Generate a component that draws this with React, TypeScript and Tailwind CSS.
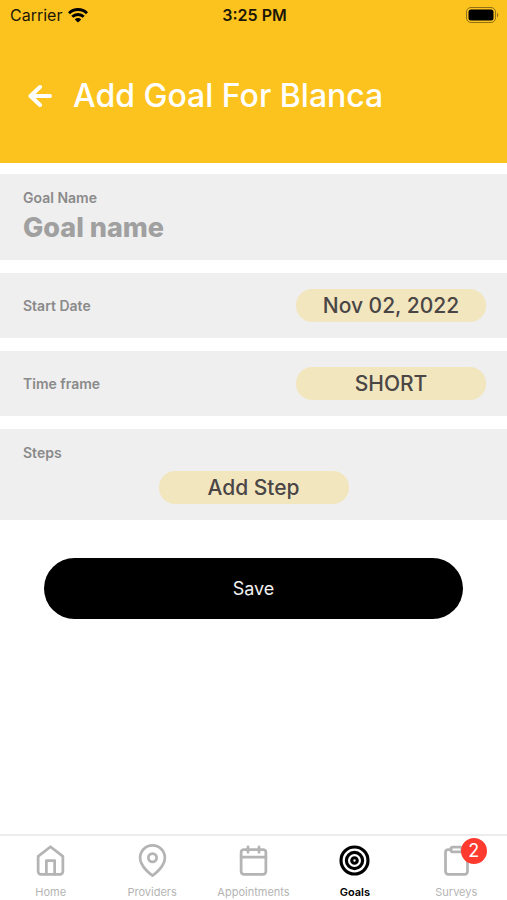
import { useState } from 'react'
import type { ComponentType, ReactNode } from 'react'
import clsx from 'clsx'
import { FiHome, FiMapPin } from 'react-icons/fi'

interface Tab { label: string; icon: ComponentType<{ size?: number }>; badge?: number }

const TABS: Tab[] = [
  { label: 'Home', icon: FiHome },
  { label: 'Providers', icon: FiMapPin },
  { label: 'Appointments', icon: CalendarIcon },
  { label: 'Goals', icon: TargetIcon },
  { label: 'Surveys', icon: ClipboardIcon, badge: 2 },
]

const LABEL_CLS = 'text-[14px] leading-4 font-semibold text-[#8a8a8a]'

export default function App() {
  const [name, setName] = useState('')
  const [frame, setFrame] = useState('SHORT')

  return (
    <div className="min-h-screen flex flex-col bg-white font-['Inter','Liberation_Sans',sans-serif]">
      <header className="bg-[#fcc31e] pb-[45px]">
        <StatusBar />
        <div className="flex items-center gap-5 pl-7 pr-6 pt-11">
          <button type="button" aria-label="Back" className="text-white">
            <BackArrow />
          </button>
          <h1 className="text-[32px] leading-[44px] font-medium text-white">Add Goal For Blanca</h1>
        </div>
      </header>

      <form className="flex-1 flex flex-col gap-[13px] pt-[11px]" onSubmit={e => e.preventDefault()}>
        <div className="bg-[#efefef] px-[23px] pt-4 pb-3">
          <label htmlFor="goal-name" className={clsx(LABEL_CLS, 'block')}>Goal Name</label>
          <input
            id="goal-name"
            value={name}
            onChange={e => setName(e.target.value)}
            placeholder="Goal name"
            className="block w-full h-[42px] text-[27px] font-extrabold text-[#4b4646] placeholder:text-[#a0a0a0] bg-transparent outline-none"
          />
        </div>

        <Row>
          <span id="start-label" className={LABEL_CLS}>Start Date</span>
          <Pill labelledBy="start-label start-value"><span id="start-value">Nov 02, 2022</span></Pill>
        </Row>

        <Row>
          <label htmlFor="time-frame" className={LABEL_CLS}>Time frame</label>
          <select
            id="time-frame"
            value={frame}
            onChange={e => setFrame(e.target.value)}
            className="w-[190px] h-[33px] rounded-2xl bg-[#f2e6bf] text-[21px] font-medium text-[#4b4646] text-center appearance-none"
          >
            <option>SHORT</option>
            <option>LONG</option>
          </select>
        </Row>

        <div className="flex flex-col bg-[#efefef] px-[23px] py-4">
          <span className={LABEL_CLS}>Steps</span>
          <div className="flex justify-center pt-[10px]">
            <Pill>Add Step</Pill>
          </div>
        </div>

        <div className="px-11 pt-[25px]">
          <button type="submit" className="w-full h-[61px] rounded-full bg-black text-[18px] text-[#f0f0f0]">Save</button>
        </div>
      </form>

      <TabBar active="Goals" />
    </div>
  )
}

function Row({ children }: { children: ReactNode }) {
  return <div className="flex items-center justify-between bg-[#efefef] pl-[23px] pr-[21px] py-4">{children}</div>
}

function Pill({ children, labelledBy }: { children: ReactNode; labelledBy?: string }) {
  return (
    <button type="button" aria-labelledby={labelledBy} className="w-[190px] h-[33px] rounded-2xl bg-[#f2e6bf] text-[21px] font-medium text-[#4b4646]">
      {children}
    </button>
  )
}

function StatusBar() {
  return (
    <div className="grid grid-cols-3 items-center h-[30px] pl-[10px] pr-2 text-[16px] text-[#1c1707]">
      <span className="flex items-center gap-[6px]">
        Carrier
        <svg width="20" height="15" viewBox="0 0 20 15" fill="none" stroke="#000" strokeWidth="2.9">
          <path d="M1 5.2a12.8 12.8 0 0 1 18 0" />
          <path d="M4.3 8.8a8.1 8.1 0 0 1 11.4 0" />
          <path d="M10 14.6 6.8 11.4a4.6 4.6 0 0 1 6.4 0z" fill="#000" stroke="none" />
        </svg>
      </span>
      <span className="text-center font-semibold">3:25 PM</span>
      <svg className="justify-self-end" width="33" height="16" viewBox="0 0 33 16">
        <rect x="0.5" y="0.5" width="29" height="15" rx="4.5" fill="none" stroke="#8f7018" />
        <rect x="2.5" y="2.5" width="25" height="11" rx="2.5" fill="#000" />
        <path d="M31 5.7c1.7.6 1.7 4 0 4.6z" fill="#8f7018" />
      </svg>
    </div>
  )
}

function BackArrow() {
  return (
    <svg width="25" height="24" viewBox="0 0 25 24" fill="none" stroke="currentColor" strokeWidth="4" strokeLinecap="round" strokeLinejoin="round">
      <path d="M22 12H3M12 3 2.5 12l9.5 9" />
    </svg>
  )
}

function CalendarIcon({ size = 24 }: { size?: number }) {
  return (
    <svg width={size} height={size} viewBox="0 0 24 24" fill="none" stroke="currentColor" strokeWidth="2" strokeLinecap="round" strokeLinejoin="round">
      <rect x="3" y="4" width="18" height="18" rx="2" />
      <path d="M8 2v4M16 2v4M3 9.6h18" />
    </svg>
  )
}

function TargetIcon({ size = 24 }: { size?: number }) {
  return (
    <svg width={size} height={size} viewBox="0 0 24 24" fill="none" stroke="currentColor" strokeWidth="2.3">
      <circle cx="12" cy="12" r="9.8" />
      <circle cx="12" cy="12" r="5.9" />
      <circle cx="12" cy="12" r="2" />
    </svg>
  )
}

function ClipboardIcon({ size = 24 }: { size?: number }) {
  return (
    <svg width={size} height={size} viewBox="0 0 24 24" fill="none" stroke="currentColor" strokeWidth="2" strokeLinecap="round" strokeLinejoin="round">
      <path d="M16 4h2a2 2 0 0 1 2 2v14a2 2 0 0 1-2 2H6a2 2 0 0 1-2-2V6a2 2 0 0 1 2-2h2" />
      <rect x="8" y="2.2" width="8" height="3.6" rx="1.3" />
    </svg>
  )
}

function TabBar({ active }: { active: string }) {
  return (
    <nav className="grid grid-cols-5 border-t-2 border-[#ececec] bg-white pt-2">
      {TABS.map(({ label, icon: Icon, badge }) => (
        <a
          key={label}
          href={`#${label.toLowerCase()}`}
          className={clsx('flex flex-col items-center gap-2', label === active ? 'text-black font-semibold' : 'text-[#b4b4b4]')}
        >
          <span className="relative">
            <Icon size={33} />
            {badge && (
              <span className="absolute -top-[6px] left-[21px] w-[26px] h-[26px] rounded-full bg-[#ff3b30] text-white text-[18px] leading-[26px] font-normal text-center">
                {badge}
              </span>
            )}
          </span>
          <span className="text-[11px] leading-[15px]">{label}</span>
        </a>
      ))}
    </nav>
  )
}
